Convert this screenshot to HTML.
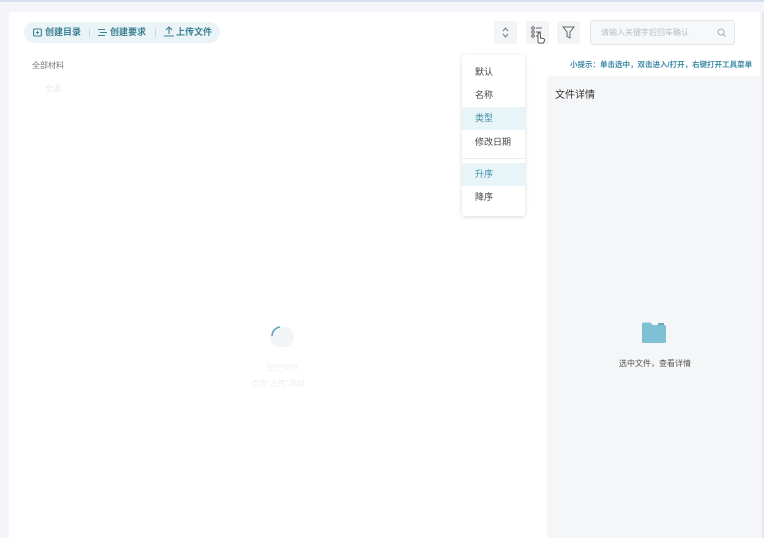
<!DOCTYPE html>
<html><head><meta charset="utf-8"><style>
*{margin:0;padding:0;box-sizing:border-box}
body{width:770px;height:538px;overflow:hidden;background:#f3f5f8;font-family:"Liberation Sans","Noto Sans CJK SC",sans-serif;position:relative;white-space:nowrap}
.topline{position:absolute;left:0;top:0;width:770px;height:2px;background:#d6e0ee}
.panel{position:absolute;left:9px;top:12px;width:751px;height:526px;background:#fff}
.edge{position:absolute;left:762px;top:12px;width:2px;height:526px;background:#e4e7ec}
.edge2{position:absolute;left:764px;top:0;width:6px;height:538px;background:#fff}
.tb{position:absolute;left:24px;top:22px;height:21px;width:196px;border-radius:11px;background:#eaf4f7;font-size:9px;color:#3d7f95;font-weight:bold;line-height:21px}
.tb span{position:absolute;top:0}
.sep{position:absolute;top:7px;width:1px;height:8px;background:#c9d6dc}
.ibtn{position:absolute;top:21px;width:23px;height:23px;background:#f2f4f6;border-radius:2px}
.search{position:absolute;left:590px;top:20px;width:145px;height:25px;border:1px solid #e2e5ea;border-radius:3px;background:#f7f8fa;font-size:8px;color:#b8bdc4;line-height:23px;padding-left:10px}
.tip{position:absolute;left:570px;top:59px;font-size:7.5px;color:#3d8ba5;font-weight:bold}
.right{position:absolute;left:547px;top:76px;width:215px;height:462px;background:#f5f6f8;border-radius:4px 4px 0 0}
.menu{position:absolute;left:462px;top:55px;width:63px;height:161px;background:#fff;border-radius:3px;box-shadow:0 1px 5px rgba(0,0,0,.15);font-size:9px;color:#444}
.menu div{position:absolute;left:0;width:63px;height:23px;line-height:23px;padding-left:13px}
.menu .on{background:#e8f5f8;color:#3d8ba5}
</style></head><body>
<div class="topline"></div>
<div class="panel"></div>
<div class="edge"></div><div class="edge2"></div>
<div class="tb">
<svg style="position:absolute;left:9px;top:6px" width="9" height="9" viewBox="0 0 9 9"><rect x="0.6" y="1" width="7.8" height="7" rx="1" fill="none" stroke="#3d7f95" stroke-width="1.1"/><path d="M3 4.5h3M4.5 3v3" stroke="#3d7f95" stroke-width="1"/></svg>
<span style="left:21px">创建目录</span>
<div class="sep" style="left:65px"></div>
<svg style="position:absolute;left:74px;top:6px" width="9" height="9" viewBox="0 0 9 9"><path d="M0 1.5h7M2 4.5h7M0 7.5h7" stroke="#3d7f95" stroke-width="1.1"/></svg>
<span style="left:86px">创建要求</span>
<div class="sep" style="left:131px"></div>
<svg style="position:absolute;left:140px;top:4px" width="10" height="11" viewBox="0 0 10 11"><path d="M5 8V1M2 4l3-3 3 3M0 10h10" fill="none" stroke="#3d7f95" stroke-width="1.1"/></svg>
<span style="left:152px">上传文件</span>
</div>
<div style="position:absolute;left:32px;top:60px;font-size:8px;color:#777">全部材料</div>
<div style="position:absolute;left:45px;top:83px;font-size:8px;color:#e6e8ea">全选</div>
<div class="ibtn" style="left:494px"><svg width="23" height="23" viewBox="0 0 23 23"><path d="M9 10l2.5-3 2.5 3M9 13l2.5 3 2.5-3" fill="none" stroke="#777" stroke-width="1"/></svg></div>
<div class="ibtn" style="left:526px"><svg width="23" height="23" viewBox="0 0 23 23"><circle cx="7" cy="7" r="1.3" fill="none" stroke="#666"/><circle cx="7" cy="11" r="1.3" fill="none" stroke="#666"/><circle cx="7" cy="15" r="1.3" fill="none" stroke="#666"/><path d="M10 7h6M10 11h5M10 15h4" stroke="#666"/><path d="M12 21v-8a1.2 1.2 0 0 1 2.4 0v4l3 .6c1 .3 1.3 1 1 2l-.8 2.5h-4.5z" fill="#fff" stroke="#444" stroke-width=".9"/></svg></div>
<div class="ibtn" style="left:557px"><svg width="23" height="23" viewBox="0 0 23 23"><path d="M6 6h11l-4 5v6l-3-1.5V11z" fill="none" stroke="#666" stroke-width="1"/></svg></div>
<div class="search">请输入关键字后回车确认<svg style="position:absolute;right:8px;top:7px" width="9" height="9" viewBox="0 0 9 9"><circle cx="4" cy="4" r="3" fill="none" stroke="#aaa"/><path d="M6.2 6.2L8.5 8.5" stroke="#aaa"/></svg></div>
<div class="tip">小提示：单击选中，双击进入/打开，右键打开工具菜单</div>
<div class="right">
<div style="position:absolute;left:8px;top:10px;font-size:10px;color:#333">文件详情</div>
<svg style="position:absolute;left:94px;top:246px" width="26" height="22" viewBox="0 0 26 22"><path d="M1 2a1.5 1.5 0 0 1 1.5-1.5h7l2 2.5h12a1.5 1.5 0 0 1 1.5 1.5v15a1.5 1.5 0 0 1-1.5 1.5h-21A1.5 1.5 0 0 1 1 19.5z" fill="#7fc1d4"/><path d="M17 2h6" stroke="#3b8fb0" stroke-width="1.5"/></svg>
<div style="position:absolute;left:72px;top:282px;font-size:8px;color:#555">选中文件，查看详情</div>
</div>
<svg style="position:absolute;left:268px;top:324px" width="28" height="25" viewBox="0 0 28 25"><rect x="2" y="3" width="24" height="20" rx="10" fill="#f2f4f6"/><path d="M4 12a9 9 0 0 1 8-9" fill="none" stroke="#5ba3c0" stroke-width="1.5"/></svg>
<div style="position:absolute;left:266px;top:362px;font-size:8px;color:#eceef0">空空如也</div>
<div style="position:absolute;left:251px;top:378px;font-size:8px;color:#eceef0">点击“上传”添加</div>
<div class="menu">
<div style="top:6px">默认</div>
<div style="top:29px">名称</div>
<div class="on" style="top:52px">类型</div>
<div style="top:76px">修改日期</div>
<div style="top:103px;height:1px;padding:0;background:#eee"></div>
<div class="on" style="top:108px">升序</div>
<div style="top:131px">降序</div>
</div>
</body></html>
